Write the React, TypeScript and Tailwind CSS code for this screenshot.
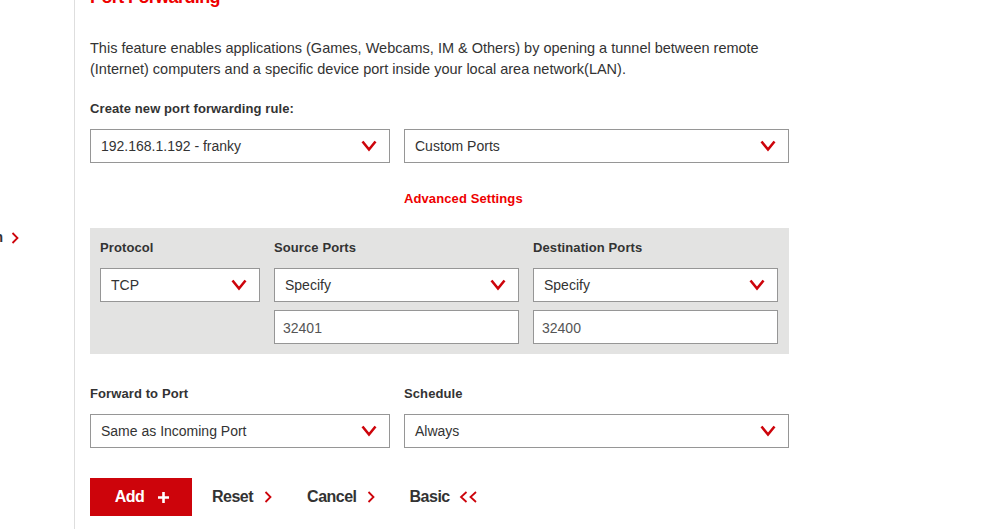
import React from "react";

const Chevron = () => (
  <svg width="16" height="12" viewBox="0 0 16 12" className="shrink-0">
    <polyline points="1.5,1.5 8,9.5 14.5,1.5" fill="none" stroke="#cd040b" strokeWidth="2.6" />
  </svg>
);

const Caret = () => (
  <svg width="8" height="12" viewBox="0 0 8 12" className="shrink-0">
    <polyline points="1.5,1 6.5,6 1.5,11" fill="none" stroke="#cd040b" strokeWidth="1.8" />
  </svg>
);

const DoubleCaret = () => (
  <svg width="19" height="12" viewBox="0 0 19 12" className="shrink-0">
    <polyline points="7.5,1 2,6 7.5,11" fill="none" stroke="#cd040b" strokeWidth="1.8" />
    <polyline points="17,1 11.5,6 17,11" fill="none" stroke="#cd040b" strokeWidth="1.8" />
  </svg>
);

function Select({ value }: { value: string }) {
  return (
    <div className="flex h-[34px] items-center justify-between border border-[#969696] bg-white pl-[10px] pr-[12px] text-[14px] text-[#333]">
      <span>{value}</span>
      <Chevron />
    </div>
  );
}

function Field({ value }: { value: string }) {
  return (
    <div className="flex h-[34px] items-center border border-[#969696] bg-white pt-[3px] pl-[8px] text-[14px] text-[#555]">
      {value}
    </div>
  );
}

const Label = ({ children }: { children: React.ReactNode }) => (
  <p className="text-[13px] font-bold leading-[16px] tracking-[0.1px] text-[#333]">{children}</p>
);

export default function App() {
  return (
    <div className="flex h-[529px] w-[985px] overflow-hidden bg-white font-['Liberation_Sans',Arial,sans-serif]">
      {/* SIDEBAR */}
      <aside className="w-[75px] shrink-0 border-r border-[#dedede]">
        <div className="mt-[227px] flex items-center justify-end gap-[8px] pr-[55px] text-[14px] font-bold whitespace-nowrap text-[#333]">
          <span>Configuration</span>
          <Caret />
        </div>
      </aside>

      {/* MAIN */}
      <main className="w-[714px] pl-[15px]">
        <h1 className="-mt-[15px] h-[24px] text-[18px] font-bold leading-[24px] tracking-[-0.6px] text-[#ee0000]">
          Port Forwarding
        </h1>

        <p className="mt-[29px] text-[14.5px] leading-[21px] text-[#333]">
          This feature enables applications (Games, Webcams, IM &amp; Others) by opening a tunnel between remote
          (Internet) computers and a specific device port inside your local area network(LAN).
        </p>

        <div className="mt-[21px]">
          <Label>Create new port forwarding rule:</Label>
        </div>

        <div className="mt-[12px] grid grid-cols-[300px_1fr] gap-x-[14px]">
          <Select value="192.168.1.192 - franky" />
          <Select value="Custom Ports" />
        </div>

        <div className="mt-[28px] grid grid-cols-[300px_1fr] gap-x-[14px]">
          <div />
          <p className="text-[13px] font-bold leading-[16px] tracking-[0.1px] text-[#ee0000]">Advanced Settings</p>
        </div>

        {/* ADVANCED PANEL */}
        <div className="mt-[21px] grid grid-cols-[160px_1fr_1fr] gap-x-[14px] bg-[#e3e3e2] pl-[10px] pr-[11px] pt-[12px] pb-[10px]">
          <Label>Protocol</Label>
          <Label>Source Ports</Label>
          <Label>Destination Ports</Label>
          <div className="mt-[12px]">
            <Select value="TCP" />
          </div>
          <div className="mt-[12px] flex flex-col gap-[8px]">
            <Select value="Specify" />
            <Field value="32401" />
          </div>
          <div className="mt-[12px] flex flex-col gap-[8px]">
            <Select value="Specify" />
            <Field value="32400" />
          </div>
        </div>

        <div className="mt-[32px] grid grid-cols-[300px_1fr] gap-x-[14px]">
          <Label>Forward to Port</Label>
          <Label>Schedule</Label>
          <div className="mt-[12px]">
            <Select value="Same as Incoming Port" />
          </div>
          <div className="mt-[12px]">
            <Select value="Always" />
          </div>
        </div>

        {/* ACTIONS */}
        <div className="mt-[30px] flex items-center text-[16px] font-bold tracking-[-0.5px] text-[#333]">
          <button className="flex h-[38px] w-[102px] items-center justify-center gap-[14px] bg-[#cd040b] pl-[2px] text-white">
            <span>Add</span>
            <svg width="11" height="11" viewBox="0 0 11 11">
              <path d="M5.5 0v11M0 5.5h11" stroke="#fff" strokeWidth="2.6" />
            </svg>
          </button>
          <button className="ml-[20px] flex items-center gap-[11px]">
            <span>Reset</span>
            <Caret />
          </button>
          <button className="ml-[35px] flex items-center gap-[10px]">
            <span>Cancel</span>
            <Caret />
          </button>
          <button className="ml-[35px] flex items-center gap-[9px]">
            <span>Basic</span>
            <DoubleCaret />
          </button>
        </div>
      </main>
    </div>
  );
}
